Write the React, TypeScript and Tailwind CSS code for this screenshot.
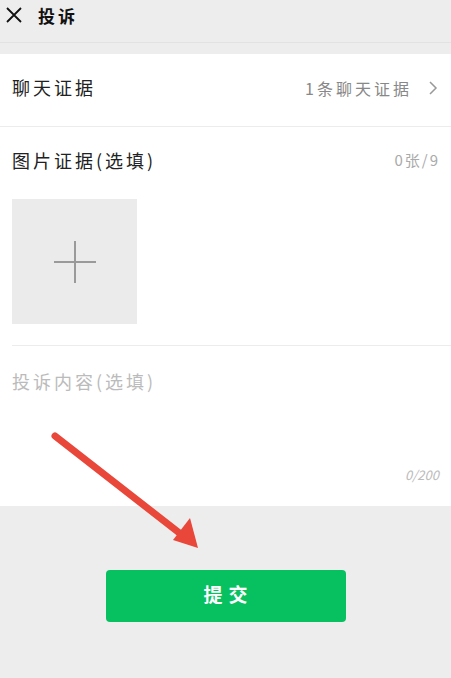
import React from "react";

const font = { fontFamily: '"Noto Sans CJK SC", "Noto Sans", sans-serif' };

const App: React.FC = () => {
  return (
    <div className="relative w-[451px] h-[678px] bg-[#ededed] overflow-hidden" style={font}>
      {/* Шапка */}
      <div className="h-[43px] flex items-center pb-[12px] border-b border-[#e2e2e2]">
        <svg width="18" height="18" viewBox="0 0 18 18" className="ml-[5px]">
          <path d="M2 2 L16 16 M16 2 L2 16" stroke="#111" strokeWidth="1.8" fill="none" />
        </svg>
        <span className="ml-[15px] text-[17px] font-bold tracking-[3px] text-[#111] leading-none">投诉</span>
      </div>
      <div className="h-[11px]" />

      {/* Форма */}
      <div className="bg-white h-[452px] flex flex-col">
        <div className="h-[73px] flex items-center pb-[5px] pl-[12px] pr-[12px] border-b border-[#ececec]">
          <span className="text-[18px] tracking-[3px] text-[#222]">聊天证据</span>
          <span className="ml-auto text-[16px] tracking-[3px] text-[#888]">1条聊天证据</span>
          <svg width="12" height="16" viewBox="0 0 12 16" className="ml-[15px]">
            <path d="M3 2 L9 8 L3 14" stroke="#999" strokeWidth="1.5" fill="none" />
          </svg>
        </div>
        <div className="ml-[12px] pr-[12px] border-b border-[#ececec] pb-[21px]">
          <div className="h-[66px] flex items-center">
            <span className="text-[18px] tracking-[3px] text-[#222]">图片证据(选填)</span>
            <span className="ml-auto text-[15px] tracking-[2px] text-[#aaa] -mr-[1px]">0张/9</span>
          </div>
          <div className="mt-[6px] w-[125px] h-[125px] bg-[#ebebeb] flex items-center justify-center">
            <svg width="44" height="44" viewBox="0 0 44 44">
              <path d="M22 1 V43 M1 22 H43" stroke="#9a9a9a" strokeWidth="2" fill="none" />
            </svg>
          </div>
        </div>
        <div className="pl-[12px] pr-[12px] pt-[22px] flex-1 flex flex-col">
          <span className="text-[18px] tracking-[3px] text-[#bbb]">投诉内容(选填)</span>
          <span className="mt-auto mb-[22px] self-end text-[13px] text-[#bbb] italic">0/200</span>
        </div>
      </div>

      {/* Кнопка отправки */}
      <div className="flex justify-center pt-[64px]">
        <button className="w-[240px] h-[52px] rounded-[4px] bg-[#07c160] text-white text-[19px] font-bold tracking-[6px] pl-[6px] pb-[4px]">
          提交
        </button>
      </div>

      {/* Красная стрелка поверх */}
      <svg className="absolute left-0 top-0 pointer-events-none" width="451" height="678">
        <line x1="55" y1="436" x2="182" y2="535" stroke="#e8473a" strokeWidth="7" strokeLinecap="round" />
        <polygon points="198,548 173,540 190,518" fill="#e8473a" />
      </svg>
    </div>
  );
};

export default App;
